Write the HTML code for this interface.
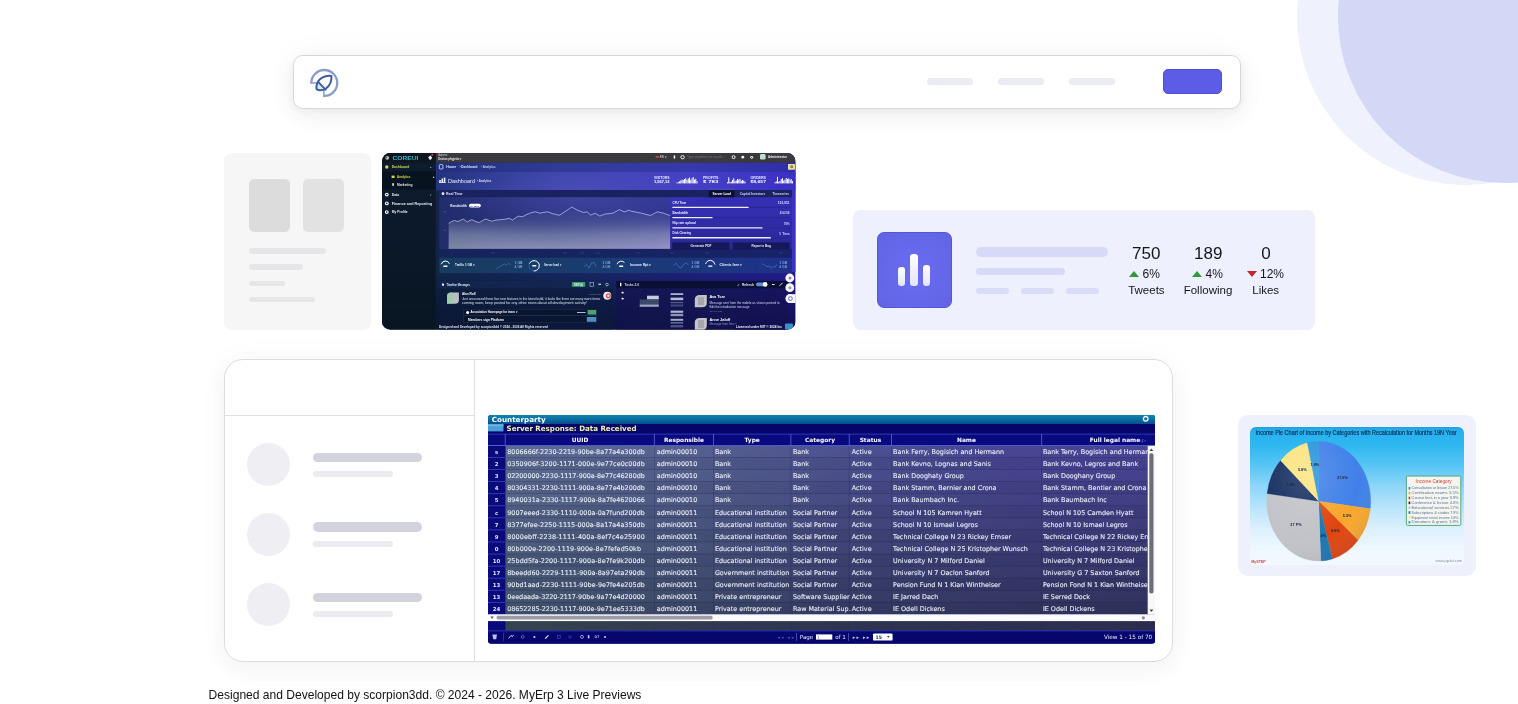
<!DOCTYPE html>
<html lang="en">
<head>
<meta charset="utf-8">
<title>MyErp 3 Live Previews</title>
<style>
*{box-sizing:border-box;margin:0;padding:0}
html,body{width:1518px;height:704px;overflow:hidden;background:#fff}
body{font-family:"Liberation Sans",sans-serif;color:#111;position:relative}
.abs{position:absolute}
#stage{position:absolute;left:0;top:0;width:1518px;height:704px;overflow:hidden;background:#fff;filter:opacity(1)}
/* blobs */
.blob{position:absolute;border-radius:50%}
#blob1{left:1296.5px;top:-151px;width:336px;height:336px;background:#eff1fd}
#blob2{left:1338px;top:-150.5px;width:333px;height:333px;background:#d2d8f5}
/* nav */
#nav{left:293px;top:55px;width:948px;height:54px;background:#fff;border:1px solid #d7d8de;border-radius:10px;box-shadow:0 7px 24px rgba(40,40,60,.06),0 2px 7px rgba(40,40,60,.045),0 0 38px rgba(40,40,60,.03)}
.pill{position:absolute;top:78.3px;height:7px;width:46px;border-radius:4px;background:#ebecf3}
#btn{left:1163px;top:69px;width:59px;height:25px;border-radius:5px;background:#5c5ce6;border:1px solid #4f4fd0}
/* skeleton card */
#sk{left:223.5px;top:153px;width:147px;height:177px;border-radius:8px;background:#f6f6f7}
.skb{position:absolute;top:179px;height:53px;width:41px;border-radius:5px}
.skl{position:absolute;left:249px;height:5.5px;border-radius:3px;background:#e6e6e8}
/* stats card */
#st{left:853px;top:210px;width:462px;height:119.5px;border-radius:8px;background:#eef0fd}
#ico{left:877px;top:232px;width:74.5px;height:75.5px;border-radius:7px;background:radial-gradient(circle at 50% 50%,#6b6df1 0%,#6466e8 75%,#6163e4 100%);border:1px solid #5658d2}
.bar{position:absolute;border-radius:3px;background:linear-gradient(#ffffff,#e4e4fb)}
.sl{position:absolute;background:#d6daf7;border-radius:5px}
.num{position:absolute;font-size:17px;line-height:17px;text-align:center;width:80px;top:245.4px;color:#15151a}
.pct{position:absolute;font-size:12px;line-height:12px;top:267.9px;color:#15151a;white-space:nowrap}
.lab{position:absolute;font-size:11.5px;line-height:12px;text-align:center;width:80px;top:284.3px;color:#15151a}
.tri{position:absolute;width:0;height:0;border-left:5px solid transparent;border-right:5px solid transparent}
.up{border-bottom:6.5px solid #2f9a3a}
.dn{border-top:6.5px solid #c8262c}
/* big card */
#big{left:224px;top:359px;width:949px;height:303px;border-radius:19px;background:#fff;border:1.3px solid #dcdde3;box-shadow:0 8px 24px rgba(40,40,60,.042),0 0 36px rgba(40,40,60,.028)}
#vdiv{left:474px;top:360px;width:1.2px;height:301px;background:#dfe0e6}
#hdiv{left:225px;top:415px;width:249px;height:1.2px;background:#dfe0e6}
.av{position:absolute;left:246.5px;width:43px;height:43px;border-radius:50%;background:#eeeef3}
.l1{position:absolute;left:312.5px;width:109.5px;height:9.5px;border-radius:5px;background:#d2d3dc}
.l2{position:absolute;left:312.5px;width:80.5px;height:5.8px;border-radius:3px;background:#ebebf0}
/* pie card */
#pc{left:1238px;top:415px;width:238px;height:161px;border-radius:10px;background:#eef0fc}
#pi{left:1250px;top:426.5px;width:214px;height:138.5px;border-radius:6px 6px 2px 2px;background:linear-gradient(#1f9fdc 0%,#26b0ee 2.5%,#30b8f1 14%,#58c6f5 28%,#8ad5f8 42%,#b6e3fb 57%,#dcf1fd 74%,#f0f8ff 90%,#f3f8ff 100%);overflow:hidden}
#foot{left:208.6px;top:687.6px;font-size:12.06px;line-height:14px;white-space:nowrap;color:#121212}
</style>
</head>
<body>
<div id="stage">
<div class="blob" id="blob1"></div>
<div class="blob" id="blob2"></div>

<!-- NAV -->
<div class="abs" id="nav"></div>
<svg class="abs" style="left:306px;top:65px" width="36" height="36" viewBox="0 0 36 36">
  <path d="M5.35 17.95 A12.95 12.95 0 1 1 17.85 30.9" fill="none" stroke="#8c9cc9" stroke-width="2.3"/>
  <path d="M4.2 17.95 L12.6 17.95 M17.85 32.05 L17.85 24.6" fill="none" stroke="#8c9cc9" stroke-width="1.5"/>
  <path d="M12.2 17 L19.8 24.8 C16.5 25.6 12.8 25.6 10.7 24.3 C10.1 22.4 10.6 19.4 12.2 17 Z" fill="#d3eafb"/>
  <path d="M25.4 10.9 C19 10.2 12.3 13 10.7 20 C10.2 22 10.2 23.5 10.7 24.3 C13 25.6 17 25.2 20 23.5 C24 20.5 25.8 16 25.4 10.9 Z" fill="none" stroke="#3d5d9f" stroke-width="2.0" stroke-linejoin="round"/>
  <path d="M12.4 17.2 L19.6 24.7" fill="none" stroke="#3d5d9f" stroke-width="1.9" stroke-linecap="round"/>
</svg>
<div class="pill" style="left:927px"></div>
<div class="pill" style="left:998px"></div>
<div class="pill" style="left:1069px"></div>
<div class="abs" id="btn"></div>

<!-- SKELETON CARD -->
<div class="abs" id="sk"></div>
<div class="skb" style="left:249px;background:#dcdcdd"></div>
<div class="skb" style="left:303px;background:#e2e2e3"></div>
<div class="skl" style="top:248px;width:77px"></div>
<div class="skl" style="top:264px;width:54px"></div>
<div class="skl" style="top:280.5px;width:35.5px"></div>
<div class="skl" style="top:296.5px;width:65.5px"></div>

<!-- DASHBOARD -->
<!--DASH-START-->
<svg class="abs" id="dash" style="left:382.2px;top:153px" width="413.6" height="176.8" viewBox="0 0 413.6 176.8" font-family="Liberation Sans, sans-serif">
<defs>
<clipPath id="dclip"><rect x="0" y="0" width="413.6" height="176.8" rx="8.5" ry="8.5"/></clipPath>
<linearGradient id="dbg" x1="0" y1="0" x2="1" y2="0"><stop offset="0" stop-color="#23347e"/><stop offset=".35" stop-color="#3a44a8"/><stop offset=".7" stop-color="#4540c6"/><stop offset="1" stop-color="#3a30c4"/></linearGradient>
<linearGradient id="dbg2" x1="0" y1="0" x2="1" y2="0"><stop offset="0" stop-color="#0f2440"/><stop offset=".45" stop-color="#16265e"/><stop offset="1" stop-color="#221c8e"/></linearGradient>
<linearGradient id="dfade" x1="0" y1="0" x2="0" y2="1"><stop offset="0" stop-color="#000" stop-opacity="0"/><stop offset="1" stop-color="#02061a" stop-opacity=".55"/></linearGradient>
<linearGradient id="dside" x1="0" y1="0" x2="0" y2="1"><stop offset="0" stop-color="#0e1c30"/><stop offset="1" stop-color="#081522"/></linearGradient>
<linearGradient id="dpanel" x1="0" y1="0" x2="1" y2="0"><stop offset="0" stop-color="#212d6c"/><stop offset=".5" stop-color="#2e3688"/><stop offset="1" stop-color="#3431a8"/></linearGradient>
<linearGradient id="dfill" x1="0" y1="0" x2="0" y2="1"><stop offset="0" stop-color="#56629a" stop-opacity="0"/><stop offset=".3" stop-color="#5c6898" stop-opacity=".3"/><stop offset=".65" stop-color="#7880aa" stop-opacity=".78"/><stop offset="1" stop-color="#8a8fb6"/></linearGradient>
<linearGradient id="dfillx" x1="0" y1="0" x2="1" y2="0"><stop offset="0" stop-color="#6c7a8c" stop-opacity=".45"/><stop offset=".45" stop-color="#8486b4" stop-opacity=".05"/><stop offset="1" stop-color="#9c94d6" stop-opacity=".5"/></linearGradient><linearGradient id="dfillm" x1="0" y1="0" x2="0" y2="1"><stop offset="0" stop-color="#fff" stop-opacity="0"/><stop offset=".45" stop-color="#fff" stop-opacity=".25"/><stop offset="1" stop-color="#fff" stop-opacity="1"/></linearGradient><mask id="dfm" maskUnits="userSpaceOnUse" x="60" y="50" width="235" height="50"><rect x="60" y="52" width="235" height="44" fill="url(#dfillm)"/></mask><radialGradient id="dglow" cx="190" cy="40" r="1" gradientUnits="userSpaceOnUse" gradientTransform="translate(190 40) scale(130 38) translate(-190 -40)"><stop offset="0" stop-color="#5a56c4" stop-opacity=".45"/><stop offset="1" stop-color="#5a56c4" stop-opacity="0"/></radialGradient>
<linearGradient id="dgauge" x1="0" y1="0" x2="1" y2="0"><stop offset="0" stop-color="#173c5e"/><stop offset=".5" stop-color="#1a3c74"/><stop offset="1" stop-color="#1f308a"/></linearGradient>
<linearGradient id="dright" x1="0" y1="0" x2="0" y2="1"><stop offset="0" stop-color="#352fb6"/><stop offset="1" stop-color="#2a2898"/></linearGradient>
</defs>
<g clip-path="url(#dclip)">
<rect width="413.6" height="176.8" fill="url(#dbg2)"/>
<rect x="53.7" y="9.5" width="359.90000000000003" height="28" fill="url(#dbg)"/>
<rect x="53.7" y="9.5" width="359.90000000000003" height="9.4" fill="#1c2a78" opacity=".35"/>
<rect x="57.3" y="37" width="352.6" height="59" fill="url(#dpanel)"/>
<rect x="288.2" y="44" width="121.7" height="52.5" fill="url(#dright)"/>
<rect x="409.9" y="18.9" width="4" height="100" fill="#3a32c2"/>
<rect x="57.3" y="18.9" width="352.6" height="77" fill="url(#dglow)"/>
<rect x="57.3" y="37" width="352.6" height="7.2" fill="#1a2360"/>
<rect x="326.8" y="36.6" width="25.8" height="7.6" fill="#0b1030"/>
<rect x="326.8" y="36.3" width="25.8" height=".7" fill="#5a60d0"/>
<rect x="57.3" y="96" width="352.6" height="8.8" fill="#17245f" opacity=".8"/>
<rect x="57.3" y="104.7" width="352.6" height="15.4" rx="1.5" fill="url(#dgauge)"/>
<rect x="53.7" y="120" width="359.90000000000003" height="57" fill="url(#dfade)"/>
<rect x="57.3" y="128" width="173.6" height="50" fill="#0d1c3a" opacity=".55"/>
<rect x="57.3" y="128" width="173.6" height="7.3" fill="#132852" opacity=".8"/>
<rect x="234.5" y="128" width="171" height="50" fill="#12124e" opacity=".6"/>
<rect x="234.5" y="128" width="171" height="7.3" fill="#0b0f34"/>
<rect x="0" y="0" width="53.7" height="176.8" fill="url(#dside)"/>
<rect x="0" y="18.3" width="53.7" height="18.2" fill="#081320"/>
<rect x="53.7" y="0" width="359.90000000000003" height="9.6" fill="#3a3a3e"/>
<rect x="0" y="0" width="53.7" height="9.6" fill="#10161f"/>
<text x="10.5" y="6.9" font-size="6.2" font-weight="700" fill="#39b6c8" textLength="26" lengthAdjust="spacingAndGlyphs">COREUI</text>
<circle cx="5.2" cy="4.8" r="1.9" fill="#c9c9c9"/><circle cx="4.4" cy="4.6" r=".9" fill="#444"/>
<path d="M46.2 4.2 l2.4 -1.6 l1.6 2.4 l-2.2 2.2 z" fill="#fff"/><circle cx="50.3" cy="1.8" r="1" fill="#e04040"/>
<text x="56.2" y="2.8" font-size="2.6" fill="#cfcfd4">Aqenmc</text>
<text x="56.2" y="6.6" font-size="3.4" font-weight="700" fill="#e8e8ec" textLength="23.5" lengthAdjust="spacingAndGlyphs">Dexian phgjette ▾</text>
<rect x="273.6" y="3.1" width="3.6" height="1.6" fill="#d04a4a"/><text x="278" y="5.2" font-size="2.8" fill="#e0e0e6">EN ▾</text>
<rect x="291.7" y="2.2" width="1.5" height="3.6" rx=".7" fill="#fff"/>
<circle cx="300.6" cy="4.2" r="1.7" fill="none" stroke="#fff" stroke-width=".9"/>
<text x="305" y="5" font-size="2.7" fill="#76767c" textLength="38" lengthAdjust="spacingAndGlyphs">Type anywhere to search...</text>
<circle cx="351.6" cy="4.1" r="1.5" fill="none" stroke="#fff" stroke-width=".9"/>
<circle cx="360.8" cy="4.2" r="1.4" fill="#fff"/><circle cx="369.7" cy="4.3" r="1.4" fill="#fff"/><circle cx="369.7" cy="4.3" r=".6" fill="#3a3a3e"/>
<rect x="378" y="1" width="5.6" height="5.6" rx="1.4" fill="#bfe0c8"/>
<text x="386" y="4.9" font-size="3" font-weight="700" fill="#f0f0f4" textLength="19" lengthAdjust="spacingAndGlyphs">Administrator</text>
<rect x="406" y="11" width="7" height="5.8" rx=".8" fill="#eadfa6"/><text x="407.6" y="15.4" font-size="3.6" font-weight="700" fill="#5a5020">⚙</text>
<circle cx="4.8" cy="14" r="1.7" fill="#d6d84a"/><text x="9.7" y="15.1" font-size="3.3" font-weight="700" fill="#d6d84a" textLength="17.5" lengthAdjust="spacingAndGlyphs">Dashboard</text>
<text x="48.3" y="15" font-size="3" fill="#9aa4b8">▴</text>
<rect x="9.6" y="22.6" width="3" height="2.4" fill="#d6d84a"/><text x="15" y="25" font-size="3" font-weight="700" fill="#d6d84a" textLength="13.4" lengthAdjust="spacingAndGlyphs">Analytics</text>
<text x="51.3" y="25.2" font-size="2.6" fill="#fff">▸</text>
<rect x="10.3" y="30" width="1.5" height="3" rx=".7" fill="#fff"/><text x="15" y="32.7" font-size="3" font-weight="700" fill="#dfe4ee" textLength="15.6" lengthAdjust="spacingAndGlyphs">Marketing</text>
<circle cx="4.8" cy="41.6" r="1.9" fill="#fff"/><circle cx="4.8" cy="41.6" r=".8" fill="#0e1c30"/>
<text x="9.7" y="42.800000000000004" font-size="3.2" font-weight="700" fill="#e6eaf2" textLength="7.5" lengthAdjust="spacingAndGlyphs">Data</text>
<circle cx="4.8" cy="50.4" r="1.9" fill="#fff"/><circle cx="4.8" cy="50.4" r=".8" fill="#0e1c30"/>
<text x="9.7" y="51.6" font-size="3.2" font-weight="700" fill="#e6eaf2" textLength="40.5" lengthAdjust="spacingAndGlyphs">Finance and Reporting</text>
<circle cx="4.8" cy="59.1" r="1.9" fill="#fff"/><circle cx="4.8" cy="59.1" r=".8" fill="#0e1c30"/>
<text x="9.7" y="60.300000000000004" font-size="3.2" font-weight="700" fill="#e6eaf2" textLength="16" lengthAdjust="spacingAndGlyphs">My Profile</text>
<text x="48.3" y="42.8" font-size="3" fill="#9aa4b8">▾</text>
<rect x="57.3" y="11.6" width="3.6" height="4.4" rx=".9" fill="none" stroke="#dfe3ff" stroke-width=".8"/>
<text x="64.3" y="15.1" font-size="3.1" font-weight="700" fill="#dfe3ff" textLength="10" lengthAdjust="spacingAndGlyphs">Home</text>
<text x="77.5" y="15.1" font-size="3.1" font-weight="700" fill="#dfe3ff" textLength="18" lengthAdjust="spacingAndGlyphs">› Dashboard</text>
<text x="99" y="15.1" font-size="3.1" font-weight="700" fill="#c8ccf6" textLength="14.5" lengthAdjust="spacingAndGlyphs">› Analytics</text>
<rect x="57.2" y="27" width="1.6" height="2.6" fill="#eef"/><rect x="59.5" y="25.6" width="1.6" height="4" fill="#eef"/><rect x="61.8" y="24.6" width="1.6" height="5" fill="#eef"/><rect x="57" y="29.2" width="6.6" height=".8" fill="#eef"/>
<text x="66" y="29.6" font-size="5.2" fill="#e8ebff" textLength="27" lengthAdjust="spacingAndGlyphs">Dashboard</text>
<text x="95" y="29.4" font-size="3.3" font-weight="700" fill="#d8dcff" textLength="14.5" lengthAdjust="spacingAndGlyphs">› Analytics</text>
<text x="272" y="25.6" font-size="2.7" font-weight="700" fill="#e6e8ff" textLength="15.5" lengthAdjust="spacingAndGlyphs">VISITORS</text>
<text x="272" y="30.3" font-size="3.4" font-weight="700" fill="#ffffff" textLength="15.5" lengthAdjust="spacingAndGlyphs">1,567,12</text>
<rect x="294.50" y="29.53" width="1" height="0.87" fill="#fff"/><rect x="295.75" y="29.09" width="1" height="1.30" fill="#fff"/><rect x="297.00" y="28.37" width="1" height="2.03" fill="#fff"/><rect x="298.25" y="27.50" width="1" height="2.90" fill="#fff"/><rect x="299.50" y="26.63" width="1" height="3.77" fill="#fff"/><rect x="300.75" y="26.92" width="1" height="3.48" fill="#fff"/><rect x="302.00" y="26.05" width="1" height="4.35" fill="#fff"/><rect x="303.25" y="25.18" width="1" height="5.22" fill="#fff"/><rect x="304.50" y="26.92" width="1" height="3.48" fill="#fff"/><rect x="305.75" y="25.61" width="1" height="4.78" fill="#fff"/><rect x="307.00" y="24.60" width="1" height="5.80" fill="#fff"/><rect x="308.25" y="27.21" width="1" height="3.19" fill="#fff"/><rect x="309.50" y="25.32" width="1" height="5.08" fill="#fff"/><rect x="310.75" y="24.02" width="1" height="6.38" fill="#fff"/><rect x="312.00" y="26.63" width="1" height="3.77" fill="#fff"/><rect x="313.25" y="25.76" width="1" height="4.64" fill="#fff"/><rect x="314.50" y="28.22" width="1" height="2.17" fill="#fff"/>
<text x="321" y="25.6" font-size="2.7" font-weight="700" fill="#e6e8ff" textLength="15.5" lengthAdjust="spacingAndGlyphs">PROFITS</text>
<text x="321" y="30.3" font-size="3.4" font-weight="700" fill="#ffffff" textLength="15.5" lengthAdjust="spacingAndGlyphs">$ 783</text>
<rect x="345.00" y="29.24" width="1" height="1.16" fill="#fff"/><rect x="346.25" y="24.31" width="1" height="6.09" fill="#fff"/><rect x="347.50" y="28.95" width="1" height="1.45" fill="#fff"/><rect x="348.75" y="28.66" width="1" height="1.74" fill="#fff"/><rect x="350.00" y="26.92" width="1" height="3.48" fill="#fff"/><rect x="351.25" y="25.18" width="1" height="5.22" fill="#fff"/><rect x="352.50" y="28.08" width="1" height="2.32" fill="#fff"/><rect x="353.75" y="27.50" width="1" height="2.90" fill="#fff"/><rect x="355.00" y="26.05" width="1" height="4.35" fill="#fff"/><rect x="356.25" y="26.63" width="1" height="3.77" fill="#fff"/><rect x="357.50" y="25.76" width="1" height="4.64" fill="#fff"/><rect x="358.75" y="27.79" width="1" height="2.61" fill="#fff"/><rect x="360.00" y="26.92" width="1" height="3.48" fill="#fff"/><rect x="361.25" y="27.50" width="1" height="2.90" fill="#fff"/><rect x="362.50" y="28.66" width="1" height="1.74" fill="#fff"/>
<text x="368.5" y="25.6" font-size="2.7" font-weight="700" fill="#e6e8ff" textLength="15.5" lengthAdjust="spacingAndGlyphs">ORDERS</text>
<text x="368.5" y="30.3" font-size="3.4" font-weight="700" fill="#ffffff" textLength="15.5" lengthAdjust="spacingAndGlyphs">$8,657</text>
<rect x="392.50" y="29.24" width="1" height="1.16" fill="#fff"/><rect x="393.75" y="28.37" width="1" height="2.03" fill="#fff"/><rect x="395.00" y="23.73" width="1" height="6.67" fill="#fff"/><rect x="396.25" y="28.66" width="1" height="1.74" fill="#fff"/><rect x="397.50" y="28.08" width="1" height="2.32" fill="#fff"/><rect x="398.75" y="26.05" width="1" height="4.35" fill="#fff"/><rect x="400.00" y="25.18" width="1" height="5.22" fill="#fff"/><rect x="401.25" y="27.50" width="1" height="2.90" fill="#fff"/><rect x="402.50" y="26.63" width="1" height="3.77" fill="#fff"/><rect x="403.75" y="24.89" width="1" height="5.51" fill="#fff"/><rect x="405.00" y="26.05" width="1" height="4.35" fill="#fff"/><rect x="406.25" y="25.18" width="1" height="5.22" fill="#fff"/><rect x="407.50" y="26.63" width="1" height="3.77" fill="#fff"/><rect x="408.75" y="26.05" width="1" height="4.35" fill="#fff"/><rect x="410.00" y="28.08" width="1" height="2.32" fill="#fff"/>
<circle cx="61" cy="40.7" r="1.4" fill="#eef"/><text x="64" y="41.8" font-size="3" font-weight="700" fill="#dfe3ff" textLength="16.5" lengthAdjust="spacingAndGlyphs">Real Time</text>
<text x="330.5" y="41.8" font-size="3" font-weight="700" fill="#fff" textLength="18.6" lengthAdjust="spacingAndGlyphs">Server Load</text>
<text x="357.8" y="41.7" font-size="2.9" font-weight="700" fill="#cfd3ff" textLength="25.4" lengthAdjust="spacingAndGlyphs">Capital Investors</text>
<text x="390.5" y="41.7" font-size="2.9" font-weight="700" fill="#cfd3ff" textLength="16.5" lengthAdjust="spacingAndGlyphs">Timeseries</text>
<path d="M66.7 70.4 L69.5 68.6 L72.5 67.5 L75.0 68.4 L76.9 68.2 L81.2 66.0 L83.4 67.6 L85.6 68.9 L88.0 67.3 L89.9 66.7 L93.0 68.2 L97.2 69.6 L100.5 67.6 L103.7 66.0 L107.0 67.4 L110.2 68.2 L114.0 67.0 L118.9 66.7 L123.0 66.2 L127.6 65.3 L130.5 67.0 L133.5 65.0 L136.3 63.1 L140.6 63.8 L144.0 61.8 L147.9 60.2 L151.0 59.2 L153.7 58.8 L158.0 60.2 L162.0 59.3 L165.3 58.8 L168.0 59.7 L171.1 60.9 L174.0 61.3 L176.9 62.4 L180.0 60.6 L182.7 58.8 L186.5 56.4 L189.9 54.0 L193.0 55.9 L195.7 57.3 L198.5 58.3 L201.5 59.5 L205.1 58.8 L208.7 62.2 L211.0 61.0 L213.5 60.4 L217.8 63.1 L220.5 62.0 L223.6 60.9 L227.0 60.7 L230.9 60.2 L234.5 58.2 L237.4 56.6 L240.0 57.9 L242.5 58.8 L246.8 57.3 L249.5 58.3 L252.6 58.8 L256.0 59.6 L259.9 60.2 L264.0 61.5 L268.6 62.4 L272.5 60.3 L275.8 58.8 L279.0 59.7 L281.6 60.2 L285.0 61.5 L288.1 62.6 L288.1 95.8 L66.7 95.8 Z" fill="url(#dfill)"/>
<path d="M66.7 70.4 L69.5 68.6 L72.5 67.5 L75.0 68.4 L76.9 68.2 L81.2 66.0 L83.4 67.6 L85.6 68.9 L88.0 67.3 L89.9 66.7 L93.0 68.2 L97.2 69.6 L100.5 67.6 L103.7 66.0 L107.0 67.4 L110.2 68.2 L114.0 67.0 L118.9 66.7 L123.0 66.2 L127.6 65.3 L130.5 67.0 L133.5 65.0 L136.3 63.1 L140.6 63.8 L144.0 61.8 L147.9 60.2 L151.0 59.2 L153.7 58.8 L158.0 60.2 L162.0 59.3 L165.3 58.8 L168.0 59.7 L171.1 60.9 L174.0 61.3 L176.9 62.4 L180.0 60.6 L182.7 58.8 L186.5 56.4 L189.9 54.0 L193.0 55.9 L195.7 57.3 L198.5 58.3 L201.5 59.5 L205.1 58.8 L208.7 62.2 L211.0 61.0 L213.5 60.4 L217.8 63.1 L220.5 62.0 L223.6 60.9 L227.0 60.7 L230.9 60.2 L234.5 58.2 L237.4 56.6 L240.0 57.9 L242.5 58.8 L246.8 57.3 L249.5 58.3 L252.6 58.8 L256.0 59.6 L259.9 60.2 L264.0 61.5 L268.6 62.4 L272.5 60.3 L275.8 58.8 L279.0 59.7 L281.6 60.2 L285.0 61.5 L288.1 62.6 L288.1 95.8 L66.7 95.8 Z" fill="url(#dfillx)" mask="url(#dfm)"/>
<path d="M66.7 70.4 L69.5 68.6 L72.5 67.5 L75.0 68.4 L76.9 68.2 L81.2 66.0 L83.4 67.6 L85.6 68.9 L88.0 67.3 L89.9 66.7 L93.0 68.2 L97.2 69.6 L100.5 67.6 L103.7 66.0 L107.0 67.4 L110.2 68.2 L114.0 67.0 L118.9 66.7 L123.0 66.2 L127.6 65.3 L130.5 67.0 L133.5 65.0 L136.3 63.1 L140.6 63.8 L144.0 61.8 L147.9 60.2 L151.0 59.2 L153.7 58.8 L158.0 60.2 L162.0 59.3 L165.3 58.8 L168.0 59.7 L171.1 60.9 L174.0 61.3 L176.9 62.4 L180.0 60.6 L182.7 58.8 L186.5 56.4 L189.9 54.0 L193.0 55.9 L195.7 57.3 L198.5 58.3 L201.5 59.5 L205.1 58.8 L208.7 62.2 L211.0 61.0 L213.5 60.4 L217.8 63.1 L220.5 62.0 L223.6 60.9 L227.0 60.7 L230.9 60.2 L234.5 58.2 L237.4 56.6 L240.0 57.9 L242.5 58.8 L246.8 57.3 L249.5 58.3 L252.6 58.8 L256.0 59.6 L259.9 60.2 L264.0 61.5 L268.6 62.4 L272.5 60.3 L275.8 58.8 L279.0 59.7 L281.6 60.2 L285.0 61.5 L288.1 62.6" fill="none" stroke="#c9cdf2" stroke-width=".7" stroke-linejoin="round"/>
<text x="68.3" y="53.6" font-size="2.9" font-weight="700" fill="#e8ebff" textLength="16.5" lengthAdjust="spacingAndGlyphs">Bandwidth</text>
<rect x="87" y="50.8" width="11.8" height="3.7" rx="1.8" fill="#fff"/><text x="88.6" y="53.6" font-size="2.5" font-weight="700" fill="#3a44a8" textLength="8.4" lengthAdjust="spacingAndGlyphs">24 kbps</text>
<rect x="61.6" y="58.4" width="2.4" height=".8" fill="#6e78c0" opacity=".6"/>
<rect x="61.6" y="76.8" width="2.4" height=".8" fill="#6e78c0" opacity=".6"/>
<text x="290.6" y="50.8" font-size="2.9" font-weight="700" fill="#eef0ff" textLength="13.6" lengthAdjust="spacingAndGlyphs">CPU Time</text>
<text x="395.7" y="51.199999999999996" font-size="3" font-weight="700" fill="#c9ccff" textLength="12" lengthAdjust="spacingAndGlyphs">156,851</text>
<rect x="290.3" y="53.699999999999996" width="117.4" height="1.3" fill="#2a2690" opacity=".8"/>
<rect x="290.3" y="53.699999999999996" width="76.4" height="1.4" rx=".5" fill="#ecedff"/>
<text x="290.6" y="61" font-size="2.9" font-weight="700" fill="#eef0ff" textLength="15.5" lengthAdjust="spacingAndGlyphs">Bandwidth</text>
<text x="397.7" y="61.4" font-size="3" font-weight="700" fill="#c9ccff" textLength="10" lengthAdjust="spacingAndGlyphs">414 GB</text>
<rect x="290.3" y="63.9" width="117.4" height="1.3" fill="#2a2690" opacity=".8"/>
<rect x="290.3" y="63.9" width="40.3" height="1.4" rx=".5" fill="#ecedff"/>
<text x="290.6" y="71.3" font-size="2.9" font-weight="700" fill="#eef0ff" textLength="23" lengthAdjust="spacingAndGlyphs">Nip rate upload</text>
<text x="401.7" y="71.7" font-size="3" font-weight="700" fill="#c9ccff" textLength="6" lengthAdjust="spacingAndGlyphs">79%</text>
<rect x="290.3" y="74.2" width="117.4" height="1.3" fill="#2a2690" opacity=".8"/>
<rect x="290.3" y="74.2" width="90.3" height="1.4" rx=".5" fill="#ecedff"/>
<text x="290.6" y="81.2" font-size="2.9" font-weight="700" fill="#eef0ff" textLength="18.4" lengthAdjust="spacingAndGlyphs">Disk Clearing</text>
<text x="397.09999999999997" y="81.60000000000001" font-size="3" font-weight="700" fill="#c9ccff" textLength="10.6" lengthAdjust="spacingAndGlyphs">1 Tera</text>
<rect x="290.3" y="84.10000000000001" width="117.4" height="1.3" fill="#2a2690" opacity=".8"/>
<rect x="290.3" y="84.10000000000001" width="98.6" height="1.4" rx=".5" fill="#ecedff"/>
<rect x="290.3" y="89.4" width="57.3" height="7.2" fill="#15195a"/><rect x="350.7" y="89.4" width="57" height="7.2" fill="#15195a"/>
<text x="308.5" y="94.1" font-size="2.9" font-weight="700" fill="#e8eaff" textLength="21" lengthAdjust="spacingAndGlyphs">Generate PDF</text>
<text x="369.5" y="94.1" font-size="2.9" font-weight="700" fill="#e8eaff" textLength="19.5" lengthAdjust="spacingAndGlyphs">Report a Bug</text>
<rect x="109" y="99.4" width="4" height=".9" fill="#4a58a8" opacity=".5"/>
<rect x="181" y="99.4" width="4" height=".9" fill="#4a58a8" opacity=".5"/>
<rect x="198" y="99.4" width="4" height=".9" fill="#4a58a8" opacity=".5"/>
<rect x="214" y="99.4" width="4" height=".9" fill="#4a58a8" opacity=".5"/>
<rect x="254" y="99.4" width="4" height=".9" fill="#4a58a8" opacity=".5"/>
<rect x="288" y="99.4" width="4" height=".9" fill="#4a58a8" opacity=".5"/>
<rect x="323" y="99.4" width="4" height=".9" fill="#4a58a8" opacity=".5"/>
<rect x="397" y="99.4" width="4" height=".9" fill="#4a58a8" opacity=".5"/>
<path d="M59.36 110.83 A4.3 4.3 0 0 1 67.30 110.48" fill="none" stroke="#fff" stroke-width="1" stroke-linecap="round"/><rect x="61.3" y="112.6" width="4.2" height="1.3" rx=".4" fill="#fff"/>
<circle cx="152.2" cy="112.8" r="5.2" fill="none" stroke="#2c5c98" stroke-width="1"/><path d="M147.6 110.2 A5.2 5.2 0 1 1 152.2 118" fill="none" stroke="#fff" stroke-width="1" stroke-linecap="round"/><rect x="150.2" y="112" width="4.2" height="1.5" rx=".4" fill="#fff"/>
<path d="M235.16 110.83 A4.3 4.3 0 0 1 242.15 109.18" fill="none" stroke="#fff" stroke-width="1" stroke-linecap="round"/><rect x="237.1" y="112.6" width="4.2" height="1.3" rx=".4" fill="#fff"/>
<path d="M323.79 110.56 A4.8 4.8 0 0 1 333.00 111.24" fill="none" stroke="#fff" stroke-width="1" stroke-linecap="round"/><rect x="326.2" y="112.5" width="4.2" height="1.3" rx=".4" fill="#fff"/>
<text x="73" y="113" font-size="3" font-weight="700" fill="#e8f0ff" textLength="20" lengthAdjust="spacingAndGlyphs">Traffic 1 GB ▾</text>
<text x="162" y="113" font-size="3" font-weight="700" fill="#e8f0ff" textLength="17.5" lengthAdjust="spacingAndGlyphs">Server load ▾</text>
<text x="248.2" y="113" font-size="3" font-weight="700" fill="#e8f0ff" textLength="21.5" lengthAdjust="spacingAndGlyphs">Income Rpt ▾</text>
<text x="337.6" y="113" font-size="3" font-weight="700" fill="#e8f0ff" textLength="23" lengthAdjust="spacingAndGlyphs">Clients free ▾</text>
<path d="M114.5 115.6 L116.5 114.2 L118.5 113.6 L120.5 112.0 L122.5 111.0 L124.5 112.2 L126.5 110.4 L128.5 111.6" fill="none" stroke="#5f9ad8" stroke-width=".6" opacity=".75"/>
<path d="M202.0 113.6 L204.5 111.6 L207.0 115.2 L209.5 110.0 L212.0 109.6 L214.0 113.6" fill="none" stroke="#5f9ad8" stroke-width=".6" opacity=".75"/>
<path d="M291.5 112.6 L294.0 110.2 L296.5 113.6 L299.0 115.2 L301.5 111.6 L304.0 110.0 L306.5 112.0" fill="none" stroke="#5f9ad8" stroke-width=".6" opacity=".75"/>
<path d="M380.0 110.6 L382.5 112.2 L385.0 113.6 L387.5 113.0 L389.0 115.6 L391.0 113.6 L393.0 114.2 L395.0 111.6" fill="none" stroke="#5f9ad8" stroke-width=".6" opacity=".75"/>
<text x="132.6" y="111.2" font-size="2.7" font-weight="700" fill="#8fc4ee" opacity=".8" textLength="8" lengthAdjust="spacingAndGlyphs">1 GB</text><text x="132.6" y="115.4" font-size="2.7" font-weight="700" fill="#8fc4ee" opacity=".7" textLength="8" lengthAdjust="spacingAndGlyphs">4 GB</text>
<text x="220.4" y="111.2" font-size="2.7" font-weight="700" fill="#8fc4ee" opacity=".8" textLength="8" lengthAdjust="spacingAndGlyphs">1 GB</text><text x="220.4" y="115.4" font-size="2.7" font-weight="700" fill="#8fc4ee" opacity=".7" textLength="8" lengthAdjust="spacingAndGlyphs">4 GB</text>
<text x="309.5" y="111.2" font-size="2.7" font-weight="700" fill="#8fc4ee" opacity=".8" textLength="8" lengthAdjust="spacingAndGlyphs">1 GB</text><text x="309.5" y="115.4" font-size="2.7" font-weight="700" fill="#8fc4ee" opacity=".7" textLength="8" lengthAdjust="spacingAndGlyphs">4 GB</text>
<text x="397.2" y="111.2" font-size="2.7" font-weight="700" fill="#8fc4ee" opacity=".8" textLength="8" lengthAdjust="spacingAndGlyphs">1 GB</text><text x="397.2" y="115.4" font-size="2.7" font-weight="700" fill="#8fc4ee" opacity=".7" textLength="8" lengthAdjust="spacingAndGlyphs">4 GB</text>
<path d="M60.6 130 l1.6 1.2 l-.6 1.8 l-1.8 -.8 z" fill="#fff"/><text x="64.5" y="133" font-size="3" font-weight="700" fill="#e4ecf8" textLength="23.5" lengthAdjust="spacingAndGlyphs">Timeline Messages</text>
<rect x="189.9" y="129.1" width="13.3" height="4.7" rx=".6" fill="#3d9c6c"/><text x="192" y="132.7" font-size="2.7" font-weight="700" fill="#d9f5e6" textLength="9" lengthAdjust="spacingAndGlyphs">NEW (6)</text>
<rect x="208" y="129.6" width="3.6" height="3.6" fill="none" stroke="#b9c4e0" stroke-width=".6"/><rect x="216.4" y="130.6" width="2.6" height="1.4" fill="#b9c4e0"/><circle cx="225" cy="131.6" r="1.3" fill="none" stroke="#b9c4e0" stroke-width=".7"/>
<path d="M65 143 q0 -3.5 4 -3.5 h7.9 v7.8 q0 3.5 -4 3.5 h-7.9 z" fill="#b9c0c0"/><path d="M65 143 q0 -3.5 4 -3.5 h1.5 v11.3 h-5.5 z" fill="#8fd0a0" opacity=".6"/>
<text x="80" y="142.3" font-size="3" font-weight="700" fill="#fff" textLength="13.6" lengthAdjust="spacingAndGlyphs">Alan Rolf</text>
<text x="80" y="146.9" font-size="3" fill="#d8e2f0" textLength="138" lengthAdjust="spacingAndGlyphs">Just announced these five new features in the latest build, it looks like there are many more items</text>
<text x="80" y="151" font-size="3" fill="#d8e2f0" textLength="125" lengthAdjust="spacingAndGlyphs">coming soon, keep posted for any other news about all development activity!</text>
<text x="207" y="141.9" font-size="2.4" fill="#7d8cae" textLength="12" lengthAdjust="spacingAndGlyphs">8 mins ago</text>
<rect x="81.2" y="156.2" width="133.3" height="6.6" fill="#0a1630" stroke="#2a3c62" stroke-width=".4"/><rect x="81.2" y="162.8" width="133.3" height="7" fill="#0a1630" stroke="#2a3c62" stroke-width=".4"/>
<circle cx="85.6" cy="159.4" r="1.5" fill="#fff"/><text x="88.5" y="160.5" font-size="3" font-weight="700" fill="#fff" textLength="47" lengthAdjust="spacingAndGlyphs">Association Homepage for team ▾</text>
<text x="86" y="167.7" font-size="3" font-weight="700" fill="#fff" textLength="36" lengthAdjust="spacingAndGlyphs">Members sign Platform</text>
<rect x="195" y="159" width="8.6" height=".9" fill="#c6cde0"/><rect x="205.6" y="157" width="8.6" height="4.6" fill="#4aa46e"/><rect x="204.8" y="164" width="9.4" height="4.8" fill="#4d8fc0"/>
<text x="57" y="175.2" font-size="3" font-weight="700" fill="#dfe6f4" textLength="109" lengthAdjust="spacingAndGlyphs">Designed and Developed by scorpion3dd © 2024 - 2026 All Rights reserved</text>
<circle cx="225.3" cy="142.8" r="4" fill="#f4ecec"/><circle cx="226.4" cy="142.8" r="1.9" fill="none" stroke="#d05050" stroke-width="1.3"/>
<rect x="238" y="129.8" width="1.4" height="3.4" fill="#fff"/><text x="242.6" y="132.9" font-size="2.9" font-weight="700" fill="#cfd5f4" textLength="14.5" lengthAdjust="spacingAndGlyphs">Tasks 2.0</text>
<text x="355.5" y="132.7" font-size="2.8" font-weight="700" fill="#dfe3ff" textLength="16.5" lengthAdjust="spacingAndGlyphs">✓ Refresh</text>
<rect x="374" y="129.6" width="10" height="3.6" rx="1.8" fill="#5d8fd0"/><circle cx="383.2" cy="131.4" r="2.3" fill="#fff"/>
<rect x="390" y="131" width="2.6" height=".9" fill="#fff"/><path d="M397.6 132.8 l3 -3" stroke="#fff" stroke-width=".9"/>
<rect x="239.6" y="138.8" width="2" height="1.6" fill="#fff"/><rect x="239.6" y="144.8" width="2" height="1.6" fill="#fff"/>
<rect x="265" y="142.7" width="11.8" height="3.8" fill="#c6ccd8"/><rect x="257.7" y="146.5" width="19.1" height="4.6" fill="#3b4a6c"/><rect x="257.7" y="151.4" width="19.1" height="2.4" fill="#9aa4bc"/>
<rect x="288.6" y="140.2" width="12.6" height="1.8" fill="#dfe5f6" opacity=".75"/>
<rect x="288.6" y="144.6" width="12.6" height="2.6" fill="#eef2ff" opacity=".75"/>
<rect x="288.6" y="149" width="12.6" height="1.2" fill="#6e7bb0" opacity=".75"/>
<rect x="288.6" y="151.4" width="12.6" height="2.2" fill="#4a568a" opacity=".75"/>
<rect x="288.6" y="157.6" width="12.6" height="2.2" fill="#e4e9f8" opacity=".75"/>
<rect x="288.6" y="160.8" width="12.6" height="2.4" fill="#b8c2e0" opacity=".75"/>
<rect x="288.6" y="165.8" width="12.6" height="2" fill="#d8def2" opacity=".75"/>
<rect x="288.6" y="169" width="12.6" height="1.6" fill="#7e8ab6" opacity=".75"/>
<rect x="288.6" y="172" width="12.6" height="2.4" fill="#5a669a" opacity=".75"/>
<path d="M312.8 146.6 q0 -4.5 5 -4.5 h7 v7.6 q0 4.6 -5 4.6 h-7 z" fill="#c2c4c8"/><path d="M316 144.1 h6 v8 h-6 z" fill="#8e9096" opacity=".55"/>
<path d="M312.8 169.4 q0 -4.5 5 -4.5 h7 v7.6 q0 4.6 -5 4.6 h-7 z" fill="#c2c4c8"/><path d="M316 166.9 h6 v8 h-6 z" fill="#8e9096" opacity=".55"/>
<text x="327.4" y="145.2" font-size="3.3" font-weight="700" fill="#fff" textLength="15.6" lengthAdjust="spacingAndGlyphs">Ava Tsar</text>
<text x="327.4" y="150.6" font-size="2.9" fill="#d3d8f4" textLength="70" lengthAdjust="spacingAndGlyphs">Message sent from the mobile as shown posted to</text>
<text x="327.4" y="154.8" font-size="2.9" fill="#d3d8f4" textLength="40" lengthAdjust="spacingAndGlyphs">Edit the introduction message</text>
<text x="327.4" y="158.9" font-size="2.4" fill="#7a82c0" textLength="13" lengthAdjust="spacingAndGlyphs">10:47 PM</text>
<text x="327.4" y="167.6" font-size="3.3" font-weight="700" fill="#fff" textLength="21" lengthAdjust="spacingAndGlyphs">Anne Jaloff</text>
<text x="327.4" y="172.4" font-size="2.8" fill="#8e96c8" textLength="27" lengthAdjust="spacingAndGlyphs">Message from forum</text>
<rect x="352" y="170.6" width="52" height="6.2" fill="#101050" opacity=".85"/><text x="354" y="175" font-size="3" font-weight="700" fill="#eef0ff" textLength="46" lengthAdjust="spacingAndGlyphs">Licensed under MIT © 2024 Inc</text>
<rect x="403" y="170.6" width="8" height="6.2" rx="1" fill="#3f8ec8"/>
<circle cx="407.8" cy="125" r="4.4" fill="#f7f7fb"/><circle cx="408" cy="125" r="1.5" fill="#8a8a92"/>
<circle cx="407.8" cy="134.7" r="4.4" fill="#f7f7fb"/><circle cx="408" cy="134.7" r="1.5" fill="#9a9aa2"/>
<circle cx="407.8" cy="145.6" r="4.4" fill="#f7f7fb"/><circle cx="408" cy="145.6" r="1.5" fill="#5c6ad0"/>
<rect x="406" y="141.2" width="8" height="8.8" fill="#f7f7fb"/><circle cx="408.4" cy="145.6" r="1.9" fill="none" stroke="#5c6ad0" stroke-width="1"/>
</g></svg>
<!--DASH-END-->

<!-- STATS CARD -->
<div class="abs" id="st"></div>
<div class="abs" id="ico"></div>
<div class="bar" style="left:898px;top:267px;width:7.2px;height:18.6px"></div>
<div class="bar" style="left:910.3px;top:253.6px;width:7.4px;height:32px"></div>
<div class="bar" style="left:922.7px;top:265.3px;width:7.3px;height:20.3px"></div>
<div class="sl" style="left:976px;top:246.8px;width:132px;height:10px"></div>
<div class="sl" style="left:976px;top:268px;width:88.5px;height:7px;border-radius:4px"></div>
<div class="sl" style="left:976px;top:288.3px;width:32.5px;height:5.8px;border-radius:3px;background:#d9dcf6"></div>
<div class="sl" style="left:1021px;top:288.3px;width:32.5px;height:5.8px;border-radius:3px;background:#d9dcf6"></div>
<div class="sl" style="left:1066px;top:288.3px;width:33px;height:5.8px;border-radius:3px;background:#d9dcf6"></div>
<div class="num" style="left:1106.2px">750</div>
<div class="num" style="left:1168.3px">189</div>
<div class="num" style="left:1226px">0</div>
<div class="tri up" style="left:1129px;top:271px"></div><div class="pct" style="left:1142.5px">6%</div>
<div class="tri up" style="left:1192px;top:271px"></div><div class="pct" style="left:1205.5px">4%</div>
<div class="tri dn" style="left:1246.7px;top:270.5px"></div><div class="pct" style="left:1260px">12%</div>
<div class="lab" style="left:1106.4px">Tweets</div>
<div class="lab" style="left:1168px">Following</div>
<div class="lab" style="left:1225.7px">Likes</div>

<!-- BIG CARD -->
<div class="abs" id="big"></div>
<div class="abs" id="vdiv"></div>
<div class="abs" id="hdiv"></div>
<div class="av" style="top:443px"></div><div class="l1" style="top:452.6px"></div><div class="l2" style="top:471.2px"></div>
<div class="av" style="top:513px"></div><div class="l1" style="top:522.4px"></div><div class="l2" style="top:540.8px"></div>
<div class="av" style="top:583px"></div><div class="l1" style="top:592.5px"></div><div class="l2" style="top:611.2px"></div>

<!-- TABLE -->
<!--TABLE-START-->
<svg class="abs" id="tbl" style="left:488px;top:415px" width="667.3" height="228.8" viewBox="0 0 667.3 228.8" font-family="DejaVu Sans, Liberation Sans, sans-serif">
<defs>
<clipPath id="tclip"><path d="M0 3 Q0 0 3 0 H664.3 Q667.3 0 667.3 3 V225.3 Q667.3 228.8 663.8 228.8 H3.5 Q0 228.8 0 225.3 Z"/></clipPath>
<clipPath id="tdata"><rect x="17.2" y="19" width="642.5" height="181"/></clipPath>
<linearGradient id="ttitle" x1="0" y1="0" x2="0" y2="1"><stop offset="0" stop-color="#0d86ae"/><stop offset=".45" stop-color="#0c6fa2"/><stop offset="1" stop-color="#0a4a8c"/></linearGradient>
<linearGradient id="trow" x1="0" y1="0" x2="1" y2="0"><stop offset="0" stop-color="#5e6c93"/><stop offset=".28" stop-color="#566190"/><stop offset=".55" stop-color="#4d5192"/><stop offset=".8" stop-color="#494695"/><stop offset="1" stop-color="#4a4598"/></linearGradient>
<linearGradient id="trowb" x1="0" y1="0" x2="1" y2="0"><stop offset="0" stop-color="#41536a"/><stop offset=".3" stop-color="#3b4766"/><stop offset=".55" stop-color="#353a62"/><stop offset="1" stop-color="#30325a"/></linearGradient>
<linearGradient id="tblank" x1="0" y1="0" x2="1" y2="0"><stop offset="0" stop-color="#35434f"/><stop offset=".4" stop-color="#303750"/><stop offset="1" stop-color="#2b2d4f"/></linearGradient>
<linearGradient id="tmg" x1="0" y1="0" x2="0" y2="1"><stop offset="0" stop-color="#fff" stop-opacity="0"/><stop offset="1" stop-color="#fff" stop-opacity="1"/></linearGradient>
<mask id="tmask" maskUnits="userSpaceOnUse" x="0" y="30.5" width="667.3" height="169"><rect x="0" y="30.5" width="667.3" height="169" fill="url(#tmg)"/></mask>
<linearGradient id="tdark" x1="0" y1="0" x2="0" y2="1"><stop offset="0" stop-color="#0a1428" stop-opacity="0"/><stop offset=".45" stop-color="#0a1428" stop-opacity=".2"/><stop offset="1" stop-color="#0a1428" stop-opacity=".52"/></linearGradient>
<linearGradient id="tteal" x1="0" y1="0" x2="1" y2="0"><stop offset="0" stop-color="#2d5a5a" stop-opacity=".35"/><stop offset=".5" stop-color="#2d5a5a" stop-opacity="0"/></linearGradient>
</defs>
<g clip-path="url(#tclip)">
<rect width="667.3" height="228.8" fill="#07076e"/>
<rect width="667.3" height="9.2" fill="url(#ttitle)"/>
<rect y="9.2" width="667.3" height="10" fill="#05056a"/>
<rect x="0" y="9.2" width="15.5" height="7.2" fill="#4a9fd6"/><rect x="0" y="9.2" width="15.5" height="2" fill="#7cc0ea" opacity=".7"/>
<text x="3.7" y="6.9" font-size="7" font-weight="700" fill="#ffffff" textLength="54" lengthAdjust="spacingAndGlyphs">Counterparty</text>
<text x="18.6" y="15.6" font-size="7.4" font-weight="700" fill="#f3f1a6" textLength="130" lengthAdjust="spacingAndGlyphs">Server Response: Data Received</text>
<circle cx="657.7" cy="3.8" r="2.3" fill="#0c6fa2" stroke="#fff" stroke-width="1.3"/>
<rect x="0" y="19" width="667.3" height="11.5" fill="#0a0a80"/>
<rect x="17.2" y="30.5" width="642.8" height="169.04" fill="url(#trow)"/>
<rect x="17.2" y="30.5" width="642.8" height="169.04" fill="url(#trowb)" mask="url(#tmask)"/>
<rect x="17.2" y="206" width="650.0999999999999" height="9.7" fill="url(#tblank)"/>
<rect x="0" y="30.5" width="17.2" height="168.84" fill="#0a0a7a"/>
<rect x="0" y="206" width="17.2" height="9.7" fill="#0a0a7a"/>
<rect x="17.2" y="42.56" width="642.8" height="12.06" fill="#101838" opacity=".06"/>
<rect x="17.2" y="66.68" width="642.8" height="12.06" fill="#101838" opacity=".06"/>
<rect x="17.2" y="90.80" width="642.8" height="12.06" fill="#101838" opacity=".06"/>
<rect x="17.2" y="114.92" width="642.8" height="12.06" fill="#101838" opacity=".06"/>
<rect x="17.2" y="139.04" width="642.8" height="12.06" fill="#101838" opacity=".06"/>
<rect x="17.2" y="163.16" width="642.8" height="12.06" fill="#101838" opacity=".06"/>
<rect x="17.2" y="187.28" width="642.8" height="12.06" fill="#101838" opacity=".06"/>
<rect x="17.2" y="30.20" width="642.8" height=".6" fill="#1a1e44" opacity=".38"/>
<rect x="0" y="30.15" width="17.2" height=".7" fill="#3e4ed0"/>
<rect x="17.2" y="42.26" width="642.8" height=".6" fill="#1a1e44" opacity=".38"/>
<rect x="0" y="42.21" width="17.2" height=".7" fill="#3e4ed0"/>
<rect x="17.2" y="54.32" width="642.8" height=".6" fill="#1a1e44" opacity=".38"/>
<rect x="0" y="54.27" width="17.2" height=".7" fill="#3e4ed0"/>
<rect x="17.2" y="66.38" width="642.8" height=".6" fill="#1a1e44" opacity=".38"/>
<rect x="0" y="66.33" width="17.2" height=".7" fill="#3e4ed0"/>
<rect x="17.2" y="78.44" width="642.8" height=".6" fill="#1a1e44" opacity=".38"/>
<rect x="0" y="78.39" width="17.2" height=".7" fill="#3e4ed0"/>
<rect x="17.2" y="90.50" width="642.8" height=".6" fill="#1a1e44" opacity=".38"/>
<rect x="0" y="90.45" width="17.2" height=".7" fill="#3e4ed0"/>
<rect x="17.2" y="102.56" width="642.8" height=".6" fill="#1a1e44" opacity=".38"/>
<rect x="0" y="102.51" width="17.2" height=".7" fill="#3e4ed0"/>
<rect x="17.2" y="114.62" width="642.8" height=".6" fill="#1a1e44" opacity=".38"/>
<rect x="0" y="114.57" width="17.2" height=".7" fill="#3e4ed0"/>
<rect x="17.2" y="126.68" width="642.8" height=".6" fill="#1a1e44" opacity=".38"/>
<rect x="0" y="126.63" width="17.2" height=".7" fill="#3e4ed0"/>
<rect x="17.2" y="138.74" width="642.8" height=".6" fill="#1a1e44" opacity=".38"/>
<rect x="0" y="138.69" width="17.2" height=".7" fill="#3e4ed0"/>
<rect x="17.2" y="150.80" width="642.8" height=".6" fill="#1a1e44" opacity=".38"/>
<rect x="0" y="150.75" width="17.2" height=".7" fill="#3e4ed0"/>
<rect x="17.2" y="162.86" width="642.8" height=".6" fill="#1a1e44" opacity=".38"/>
<rect x="0" y="162.81" width="17.2" height=".7" fill="#3e4ed0"/>
<rect x="17.2" y="174.92" width="642.8" height=".6" fill="#1a1e44" opacity=".38"/>
<rect x="0" y="174.87" width="17.2" height=".7" fill="#3e4ed0"/>
<rect x="17.2" y="186.98" width="642.8" height=".6" fill="#1a1e44" opacity=".38"/>
<rect x="0" y="186.93" width="17.2" height=".7" fill="#3e4ed0"/>
<rect x="17.2" y="199.04" width="642.8" height=".6" fill="#1a1e44" opacity=".38"/>
<rect x="0" y="198.99" width="17.2" height=".7" fill="#3e4ed0"/>
<rect x="16.9" y="30.5" width=".6" height="184.84" fill="#1a1e44" opacity=".3"/>
<rect x="166.0" y="30.5" width=".6" height="184.84" fill="#1a1e44" opacity=".3"/>
<rect x="225.1" y="30.5" width=".6" height="184.84" fill="#1a1e44" opacity=".3"/>
<rect x="302.59999999999997" y="30.5" width=".6" height="184.84" fill="#1a1e44" opacity=".3"/>
<rect x="360.9" y="30.5" width=".6" height="184.84" fill="#1a1e44" opacity=".3"/>
<rect x="403.2" y="30.5" width=".6" height="184.84" fill="#1a1e44" opacity=".3"/>
<rect x="553.4000000000001" y="30.5" width=".6" height="184.84" fill="#1a1e44" opacity=".3"/>
<rect x="0" y="18.7" width="667.3" height=".7" fill="#3e4ed0"/><rect x="0" y="30.1" width="667.3" height=".8" fill="#5767de"/>
<rect x="16.8" y="19" width=".8" height="11.5" fill="#5767de"/>
<rect x="165.9" y="19" width=".8" height="11.5" fill="#5767de"/>
<rect x="225.0" y="19" width=".8" height="11.5" fill="#5767de"/>
<rect x="302.5" y="19" width=".8" height="11.5" fill="#5767de"/>
<rect x="360.8" y="19" width=".8" height="11.5" fill="#5767de"/>
<rect x="403.1" y="19" width=".8" height="11.5" fill="#5767de"/>
<rect x="553.3000000000001" y="19" width=".8" height="11.5" fill="#5767de"/>
<g clip-path="url(#tdata)">
<text x="92" y="26.9" font-size="5.9" font-weight="700" fill="#fff" text-anchor="middle">UUID</text>
<text x="196" y="26.9" font-size="5.9" font-weight="700" fill="#fff" text-anchor="middle">Responsible</text>
<text x="264.2" y="26.9" font-size="5.9" font-weight="700" fill="#fff" text-anchor="middle">Type</text>
<text x="332" y="26.9" font-size="5.9" font-weight="700" fill="#fff" text-anchor="middle">Category</text>
<text x="382.4" y="26.9" font-size="5.9" font-weight="700" fill="#fff" text-anchor="middle">Status</text>
<text x="478.5" y="26.9" font-size="5.9" font-weight="700" fill="#fff" text-anchor="middle">Name</text>
<text x="627" y="26.9" font-size="5.9" font-weight="700" fill="#fff" text-anchor="middle">Full legal name</text>
<text x="645.5" y="26.6" font-size="4.5" fill="#8f98e8">— ◁▷</text>
<text x="19.2" y="39.25" font-size="6.42" fill="#eaedf7" stroke="#eaedf7" stroke-width=".1" textLength="137.6" lengthAdjust="spacing">8006666f-2230-2219-90be-8a77a4a300db</text>
<text x="168.8" y="39.25" font-size="6.42" fill="#eaedf7" stroke="#eaedf7" stroke-width=".1">admin00010</text>
<text x="226.9" y="39.25" font-size="6.42" fill="#eaedf7" stroke="#eaedf7" stroke-width=".1">Bank</text>
<text x="304.9" y="39.25" font-size="6.42" fill="#eaedf7" stroke="#eaedf7" stroke-width=".1">Bank</text>
<text x="363.8" y="39.25" font-size="6.42" fill="#eaedf7" stroke="#eaedf7" stroke-width=".1">Active</text>
<text x="405.1" y="39.25" font-size="6.42" fill="#eaedf7" stroke="#eaedf7" stroke-width=".1">Bank Ferry, Bogisich and Hermann</text>
<text x="554.9" y="39.25" font-size="6.42" fill="#eaedf7" stroke="#eaedf7" stroke-width=".1">Bank Terry, Bogisich and Hermann</text>
<text x="19.2" y="51.31" font-size="6.42" fill="#eaedf7" stroke="#eaedf7" stroke-width=".1" textLength="137.6" lengthAdjust="spacing">0350906f-3200-1171-000e-9e77ce0c00db</text>
<text x="168.8" y="51.31" font-size="6.42" fill="#eaedf7" stroke="#eaedf7" stroke-width=".1">admin00010</text>
<text x="226.9" y="51.31" font-size="6.42" fill="#eaedf7" stroke="#eaedf7" stroke-width=".1">Bank</text>
<text x="304.9" y="51.31" font-size="6.42" fill="#eaedf7" stroke="#eaedf7" stroke-width=".1">Bank</text>
<text x="363.8" y="51.31" font-size="6.42" fill="#eaedf7" stroke="#eaedf7" stroke-width=".1">Active</text>
<text x="405.1" y="51.31" font-size="6.42" fill="#eaedf7" stroke="#eaedf7" stroke-width=".1">Bank Kevno, Lognas and Sanis</text>
<text x="554.9" y="51.31" font-size="6.42" fill="#eaedf7" stroke="#eaedf7" stroke-width=".1">Bank Kevno, Legros and Bank</text>
<text x="19.2" y="63.37" font-size="6.42" fill="#eaedf7" stroke="#eaedf7" stroke-width=".1" textLength="137.6" lengthAdjust="spacing">02200000-2230-1117-900a-8e77c46280db</text>
<text x="168.8" y="63.37" font-size="6.42" fill="#eaedf7" stroke="#eaedf7" stroke-width=".1">admin00010</text>
<text x="226.9" y="63.37" font-size="6.42" fill="#eaedf7" stroke="#eaedf7" stroke-width=".1">Bank</text>
<text x="304.9" y="63.37" font-size="6.42" fill="#eaedf7" stroke="#eaedf7" stroke-width=".1">Bank</text>
<text x="363.8" y="63.37" font-size="6.42" fill="#eaedf7" stroke="#eaedf7" stroke-width=".1">Active</text>
<text x="405.1" y="63.37" font-size="6.42" fill="#eaedf7" stroke="#eaedf7" stroke-width=".1">Bank Dooghaty Group</text>
<text x="554.9" y="63.37" font-size="6.42" fill="#eaedf7" stroke="#eaedf7" stroke-width=".1">Bank Dooghany Group</text>
<text x="19.2" y="75.43" font-size="6.42" fill="#eaedf7" stroke="#eaedf7" stroke-width=".1" textLength="137.6" lengthAdjust="spacing">80304331-2230-1111-900a-8e77e4b200db</text>
<text x="168.8" y="75.43" font-size="6.42" fill="#eaedf7" stroke="#eaedf7" stroke-width=".1">admin00010</text>
<text x="226.9" y="75.43" font-size="6.42" fill="#eaedf7" stroke="#eaedf7" stroke-width=".1">Bank</text>
<text x="304.9" y="75.43" font-size="6.42" fill="#eaedf7" stroke="#eaedf7" stroke-width=".1">Bank</text>
<text x="363.8" y="75.43" font-size="6.42" fill="#eaedf7" stroke="#eaedf7" stroke-width=".1">Active</text>
<text x="405.1" y="75.43" font-size="6.42" fill="#eaedf7" stroke="#eaedf7" stroke-width=".1">Bank Stamm, Bernier and Crona</text>
<text x="554.9" y="75.43" font-size="6.42" fill="#eaedf7" stroke="#eaedf7" stroke-width=".1">Bank Stamm, Bentier and Crona</text>
<text x="19.2" y="87.49" font-size="6.42" fill="#eaedf7" stroke="#eaedf7" stroke-width=".1" textLength="137.6" lengthAdjust="spacing">8940031a-2330-1117-900a-8a7fe4620066</text>
<text x="168.8" y="87.49" font-size="6.42" fill="#eaedf7" stroke="#eaedf7" stroke-width=".1">admin00010</text>
<text x="226.9" y="87.49" font-size="6.42" fill="#eaedf7" stroke="#eaedf7" stroke-width=".1">Bank</text>
<text x="304.9" y="87.49" font-size="6.42" fill="#eaedf7" stroke="#eaedf7" stroke-width=".1">Bank</text>
<text x="363.8" y="87.49" font-size="6.42" fill="#eaedf7" stroke="#eaedf7" stroke-width=".1">Active</text>
<text x="405.1" y="87.49" font-size="6.42" fill="#eaedf7" stroke="#eaedf7" stroke-width=".1">Bank Baumbach Inc.</text>
<text x="554.9" y="87.49" font-size="6.42" fill="#eaedf7" stroke="#eaedf7" stroke-width=".1">Bank Baumbach Inc</text>
<text x="19.2" y="99.55" font-size="6.42" fill="#eaedf7" stroke="#eaedf7" stroke-width=".1" textLength="137.6" lengthAdjust="spacing">9007eeed-2330-1110-000a-0a7fund200db</text>
<text x="168.8" y="99.55" font-size="6.42" fill="#eaedf7" stroke="#eaedf7" stroke-width=".1">admin00011</text>
<text x="226.9" y="99.55" font-size="6.42" fill="#eaedf7" stroke="#eaedf7" stroke-width=".1">Educational institution</text>
<text x="304.9" y="99.55" font-size="6.42" fill="#eaedf7" stroke="#eaedf7" stroke-width=".1">Social Partner</text>
<text x="363.8" y="99.55" font-size="6.42" fill="#eaedf7" stroke="#eaedf7" stroke-width=".1">Active</text>
<text x="405.1" y="99.55" font-size="6.42" fill="#eaedf7" stroke="#eaedf7" stroke-width=".1">School N 105 Kamren Hyatt</text>
<text x="554.9" y="99.55" font-size="6.42" fill="#eaedf7" stroke="#eaedf7" stroke-width=".1">School N 105 Camden Hyatt</text>
<text x="19.2" y="111.61" font-size="6.42" fill="#eaedf7" stroke="#eaedf7" stroke-width=".1" textLength="137.6" lengthAdjust="spacing">8377efee-2250-1115-000a-8a17a4a350db</text>
<text x="168.8" y="111.61" font-size="6.42" fill="#eaedf7" stroke="#eaedf7" stroke-width=".1">admin00011</text>
<text x="226.9" y="111.61" font-size="6.42" fill="#eaedf7" stroke="#eaedf7" stroke-width=".1">Educational institution</text>
<text x="304.9" y="111.61" font-size="6.42" fill="#eaedf7" stroke="#eaedf7" stroke-width=".1">Social Partner</text>
<text x="363.8" y="111.61" font-size="6.42" fill="#eaedf7" stroke="#eaedf7" stroke-width=".1">Active</text>
<text x="405.1" y="111.61" font-size="6.42" fill="#eaedf7" stroke="#eaedf7" stroke-width=".1">School N 10 Ismael Legros</text>
<text x="554.9" y="111.61" font-size="6.42" fill="#eaedf7" stroke="#eaedf7" stroke-width=".1">School N 10 Ismael Legros</text>
<text x="19.2" y="123.67" font-size="6.42" fill="#eaedf7" stroke="#eaedf7" stroke-width=".1" textLength="137.6" lengthAdjust="spacing">8000ebff-2238-1111-400a-8ef7c4e25900</text>
<text x="168.8" y="123.67" font-size="6.42" fill="#eaedf7" stroke="#eaedf7" stroke-width=".1">admin00011</text>
<text x="226.9" y="123.67" font-size="6.42" fill="#eaedf7" stroke="#eaedf7" stroke-width=".1">Educational institution</text>
<text x="304.9" y="123.67" font-size="6.42" fill="#eaedf7" stroke="#eaedf7" stroke-width=".1">Social Partner</text>
<text x="363.8" y="123.67" font-size="6.42" fill="#eaedf7" stroke="#eaedf7" stroke-width=".1">Active</text>
<text x="405.1" y="123.67" font-size="6.42" fill="#eaedf7" stroke="#eaedf7" stroke-width=".1">Technical College N 23 Rickey Ernser</text>
<text x="554.9" y="123.67" font-size="6.42" fill="#eaedf7" stroke="#eaedf7" stroke-width=".1">Technical College N 22 Rickey Ernser</text>
<text x="19.2" y="135.73" font-size="6.42" fill="#eaedf7" stroke="#eaedf7" stroke-width=".1" textLength="133.8" lengthAdjust="spacing">80b000e-2200-1119-900e-8e7fefed50kb</text>
<text x="168.8" y="135.73" font-size="6.42" fill="#eaedf7" stroke="#eaedf7" stroke-width=".1">admin00011</text>
<text x="226.9" y="135.73" font-size="6.42" fill="#eaedf7" stroke="#eaedf7" stroke-width=".1">Educational institution</text>
<text x="304.9" y="135.73" font-size="6.42" fill="#eaedf7" stroke="#eaedf7" stroke-width=".1">Social Partner</text>
<text x="363.8" y="135.73" font-size="6.42" fill="#eaedf7" stroke="#eaedf7" stroke-width=".1">Active</text>
<text x="405.1" y="135.73" font-size="6.42" fill="#eaedf7" stroke="#eaedf7" stroke-width=".1">Technical College N 25 Kristopher Wunsch</text>
<text x="554.9" y="135.73" font-size="6.42" fill="#eaedf7" stroke="#eaedf7" stroke-width=".1">Technical College N 23 Kristopher</text>
<text x="19.2" y="147.79" font-size="6.42" fill="#eaedf7" stroke="#eaedf7" stroke-width=".1" textLength="137.6" lengthAdjust="spacing">25bdd5fa-2200-1117-900a-8e7fe9k200db</text>
<text x="168.8" y="147.79" font-size="6.42" fill="#eaedf7" stroke="#eaedf7" stroke-width=".1">admin00011</text>
<text x="226.9" y="147.79" font-size="6.42" fill="#eaedf7" stroke="#eaedf7" stroke-width=".1">Educational institution</text>
<text x="304.9" y="147.79" font-size="6.42" fill="#eaedf7" stroke="#eaedf7" stroke-width=".1">Social Partner</text>
<text x="363.8" y="147.79" font-size="6.42" fill="#eaedf7" stroke="#eaedf7" stroke-width=".1">Active</text>
<text x="405.1" y="147.79" font-size="6.42" fill="#eaedf7" stroke="#eaedf7" stroke-width=".1">University N 7 Milford Daniel</text>
<text x="554.9" y="147.79" font-size="6.42" fill="#eaedf7" stroke="#eaedf7" stroke-width=".1">University N 7 Milford Daniel</text>
<text x="19.2" y="159.85" font-size="6.42" fill="#eaedf7" stroke="#eaedf7" stroke-width=".1" textLength="137.6" lengthAdjust="spacing">8beedd60-2229-1111-900a-8a97eta290db</text>
<text x="168.8" y="159.85" font-size="6.42" fill="#eaedf7" stroke="#eaedf7" stroke-width=".1">admin00011</text>
<text x="226.9" y="159.85" font-size="6.42" fill="#eaedf7" stroke="#eaedf7" stroke-width=".1">Government institution</text>
<text x="304.9" y="159.85" font-size="6.42" fill="#eaedf7" stroke="#eaedf7" stroke-width=".1">Social Partner</text>
<text x="363.8" y="159.85" font-size="6.42" fill="#eaedf7" stroke="#eaedf7" stroke-width=".1">Active</text>
<text x="405.1" y="159.85" font-size="6.42" fill="#eaedf7" stroke="#eaedf7" stroke-width=".1">University N 7 Oaclon Sanford</text>
<text x="554.9" y="159.85" font-size="6.42" fill="#eaedf7" stroke="#eaedf7" stroke-width=".1">University G 7 Saxton Sanford</text>
<text x="19.2" y="171.91" font-size="6.42" fill="#eaedf7" stroke="#eaedf7" stroke-width=".1" textLength="137.6" lengthAdjust="spacing">90bd1aad-2230-1111-90be-9e7fe4e205db</text>
<text x="168.8" y="171.91" font-size="6.42" fill="#eaedf7" stroke="#eaedf7" stroke-width=".1">admin00011</text>
<text x="226.9" y="171.91" font-size="6.42" fill="#eaedf7" stroke="#eaedf7" stroke-width=".1">Government institution</text>
<text x="304.9" y="171.91" font-size="6.42" fill="#eaedf7" stroke="#eaedf7" stroke-width=".1">Social Partner</text>
<text x="363.8" y="171.91" font-size="6.42" fill="#eaedf7" stroke="#eaedf7" stroke-width=".1">Active</text>
<text x="405.1" y="171.91" font-size="6.42" fill="#eaedf7" stroke="#eaedf7" stroke-width=".1">Pension Fund N 1 Kian Wintheiser</text>
<text x="554.9" y="171.91" font-size="6.42" fill="#eaedf7" stroke="#eaedf7" stroke-width=".1">Pension Fond N 1 Kian Wintheiser</text>
<text x="19.2" y="183.97" font-size="6.42" fill="#eaedf7" stroke="#eaedf7" stroke-width=".1" textLength="137.6" lengthAdjust="spacing">0eedaada-3220-2117-90be-9a77e4d20000</text>
<text x="168.8" y="183.97" font-size="6.42" fill="#eaedf7" stroke="#eaedf7" stroke-width=".1">admin00011</text>
<text x="226.9" y="183.97" font-size="6.42" fill="#eaedf7" stroke="#eaedf7" stroke-width=".1">Private entrepreneur</text>
<text x="304.9" y="183.97" font-size="6.42" fill="#eaedf7" stroke="#eaedf7" stroke-width=".1">Software Supplier</text>
<text x="363.8" y="183.97" font-size="6.42" fill="#eaedf7" stroke="#eaedf7" stroke-width=".1">Active</text>
<text x="405.1" y="183.97" font-size="6.42" fill="#eaedf7" stroke="#eaedf7" stroke-width=".1">IE Jarred Dach</text>
<text x="554.9" y="183.97" font-size="6.42" fill="#eaedf7" stroke="#eaedf7" stroke-width=".1">IE Serred Dock</text>
<text x="19.2" y="196.03" font-size="6.42" fill="#eaedf7" stroke="#eaedf7" stroke-width=".1" textLength="137.6" lengthAdjust="spacing">08652285-2230-1117-900e-9e71ee5333db</text>
<text x="168.8" y="196.03" font-size="6.42" fill="#eaedf7" stroke="#eaedf7" stroke-width=".1">admin00011</text>
<text x="226.9" y="196.03" font-size="6.42" fill="#eaedf7" stroke="#eaedf7" stroke-width=".1">Private entrepreneur</text>
<text x="304.9" y="196.03" font-size="6.42" fill="#eaedf7" stroke="#eaedf7" stroke-width=".1">Raw Material Sup.</text>
<text x="363.8" y="196.03" font-size="6.42" fill="#eaedf7" stroke="#eaedf7" stroke-width=".1">Active</text>
<text x="405.1" y="196.03" font-size="6.42" fill="#eaedf7" stroke="#eaedf7" stroke-width=".1">IE Odell Dickens</text>
<text x="554.9" y="196.03" font-size="6.42" fill="#eaedf7" stroke="#eaedf7" stroke-width=".1">IE Odell Dickens</text>
</g>
<text x="8.6" y="39.25" font-size="5.4" font-weight="700" fill="#dfe2ff" text-anchor="middle">s</text>
<text x="8.6" y="51.31" font-size="5.4" font-weight="700" fill="#dfe2ff" text-anchor="middle">2</text>
<text x="8.6" y="63.37" font-size="5.4" font-weight="700" fill="#dfe2ff" text-anchor="middle">3</text>
<text x="8.6" y="75.43" font-size="5.4" font-weight="700" fill="#dfe2ff" text-anchor="middle">4</text>
<text x="8.6" y="87.49" font-size="5.4" font-weight="700" fill="#dfe2ff" text-anchor="middle">5</text>
<text x="8.6" y="99.55" font-size="5.4" font-weight="700" fill="#dfe2ff" text-anchor="middle">c</text>
<text x="8.6" y="111.61" font-size="5.4" font-weight="700" fill="#dfe2ff" text-anchor="middle">7</text>
<text x="8.6" y="123.67" font-size="5.4" font-weight="700" fill="#dfe2ff" text-anchor="middle">9</text>
<text x="8.6" y="135.73" font-size="5.4" font-weight="700" fill="#dfe2ff" text-anchor="middle">0</text>
<text x="8.6" y="147.79" font-size="5.4" font-weight="700" fill="#dfe2ff" text-anchor="middle">10</text>
<text x="8.6" y="159.85" font-size="5.4" font-weight="700" fill="#dfe2ff" text-anchor="middle">17</text>
<text x="8.6" y="171.91" font-size="5.4" font-weight="700" fill="#dfe2ff" text-anchor="middle">13</text>
<text x="8.6" y="183.97" font-size="5.4" font-weight="700" fill="#dfe2ff" text-anchor="middle">13</text>
<text x="8.6" y="196.03" font-size="5.4" font-weight="700" fill="#dfe2ff" text-anchor="middle">24</text>
<rect x="659.7" y="30.8" width="7.6" height="168.84" fill="#f8f8fb"/>
<rect x="661.3" y="38.2" width="4.2" height="140.3" rx="1.8" fill="#6e6e7a"/>
<path d="M661.5 36 l1.9 -2.6 l1.9 2.6 z" fill="#444"/><path d="M661.5 194.6 l1.9 2.4 l1.9 -2.4 z" fill="#444"/>
<rect x="0" y="199.3" width="667.3" height="6.8" fill="#fbfbfd"/>
<rect x="8.5" y="200.8" width="216.2" height="3.6" rx="1.6" fill="#9c9ca6"/>
<path d="M2.4 201.4 h3.4 l-1.7 2.6 z" fill="#555"/><circle cx="655.4" cy="202.8" r="1.6" fill="#8a8a96"/>
<rect x="0" y="215.7" width="667.3" height="13.2" fill="#06066c"/><rect x="0" y="215.5" width="667.3" height=".8" fill="#3444c8"/>
<path d="M4.4 219.6 h4.6 l-.8 4.6 h-3 z" fill="#b8c0f6"/><rect x="15.2" y="217.6" width=".5" height="8.6" fill="#4a56c8"/>
<path d="M20.6 223.4 l2.4 -3 l1.4 1.2 l1.2 -1.8" fill="none" stroke="#d8dcff" stroke-width=".9"/>
<circle cx="34.7" cy="221.9" r="1.4" fill="none" stroke="#8088d8" stroke-width=".7"/><circle cx="46.4" cy="222" r="1.1" fill="#c8ccff"/>
<path d="M57.2 223.6 l3.2 -3.2" stroke="#e8eaff" stroke-width="1.2"/>
<rect x="69.4" y="220.4" width="2.8" height="2.8" fill="none" stroke="#4650b8" stroke-width=".6"/><circle cx="82" cy="221.9" r="1.2" fill="none" stroke="#4650b8" stroke-width=".6"/>
<circle cx="94" cy="221.9" r="1.5" fill="none" stroke="#a8b0f0" stroke-width=".8"/><rect x="99.8" y="220.2" width="1.6" height="3.2" fill="#c8ccff"/>
<text x="106.6" y="223.4" font-size="3.6" font-weight="700" fill="#b0b8f4">07</text><circle cx="117" cy="222" r="1" fill="#c8ccff"/>
<text x="289.4" y="223.7" font-size="5" fill="#4452c0" textLength="16" lengthAdjust="spacing">◂◂ ◂◂</text>
<rect x="308.3" y="218" width=".6" height="7.8" fill="#6a78e0"/>
<text x="311.8" y="224" font-size="5.6" fill="#e8eaff">Page</text>
<rect x="328" y="219.4" width="16.3" height="5.2" fill="#fff"/><text x="329" y="223.8" font-size="4.6" fill="#667">1</text>
<text x="347.2" y="224" font-size="5.6" fill="#e8eaff">of 1</text>
<rect x="360.4" y="218" width=".6" height="7.8" fill="#6a78e0"/>
<text x="364.8" y="223.7" font-size="5" fill="#c8d0ff" textLength="16.5" lengthAdjust="spacing">▸▸ ▸▸</text>
<rect x="385" y="218.4" width="19.6" height="7.2" rx="1.2" fill="#fff"/><text x="387.6" y="223.9" font-size="4.6" font-weight="700" fill="#334">15</text><path d="M399 221 l1.4 1.8 l1.4 -1.8 z" fill="#334"/>
<text x="664.2" y="224" font-size="5.7" fill="#e8eaff" text-anchor="end">View 1 - 15 of 70</text>
</g></svg>
<!--TABLE-END-->

<!-- PIE CARD -->
<div class="abs" id="pc"></div>
<div class="abs" id="pi"></div>
<!--PIE-START-->
<svg class="abs" id="pie" style="left:1250px;top:426.7px" width="214" height="138.3" viewBox="0 0 214 138.3" font-family="Liberation Sans, sans-serif">
<defs>
<radialGradient id="pshade" cx=".38" cy=".3" r=".85"><stop offset="0" stop-color="#fff" stop-opacity=".16"/><stop offset=".6" stop-color="#fff" stop-opacity="0"/><stop offset="1" stop-color="#001030" stop-opacity=".18"/></radialGradient>
</defs>
<path d="M68.7 74.2 L68.70 14.40 A52 59.8 0 0 1 120.28 81.75 Z" fill="#4080e8" stroke="#4080e8" stroke-width=".3"/>
<path d="M68.7 74.2 L120.28 81.75 A52 59.8 0 0 1 108.05 113.29 Z" fill="#f8a62c" stroke="#f8a62c" stroke-width=".3"/>
<path d="M68.7 74.2 L108.05 113.29 A52 59.8 0 0 1 82.30 131.92 Z" fill="#e0440f" stroke="#e0440f" stroke-width=".3"/>
<path d="M68.7 74.2 L82.30 131.92 A52 59.8 0 0 1 70.75 133.95 Z" fill="#1c76ae" stroke="#1c76ae" stroke-width=".3"/>
<path d="M68.7 74.2 L70.75 133.95 A52 59.8 0 0 1 17.13 66.54 Z" fill="#c2c3c8" stroke="#c2c3c8" stroke-width=".3"/>
<path d="M68.7 74.2 L17.13 66.54 A52 59.8 0 0 1 30.60 33.51 Z" fill="#142d60" stroke="#142d60" stroke-width=".3"/>
<path d="M68.7 74.2 L30.60 33.51 A52 59.8 0 0 1 57.39 15.83 Z" fill="#fde480" stroke="#fde480" stroke-width=".3"/>
<path d="M68.7 74.2 L57.39 15.83 A52 59.8 0 0 1 68.70 14.40 Z" fill="#2b95dc" stroke="#2b95dc" stroke-width=".3"/>
<ellipse cx="68.7" cy="74.2" rx="52" ry="59.8" fill="url(#pshade)"/>
<text x="5.6" y="7.9" font-size="7.7" fill="#0b2a58" stroke="#0b2a58" stroke-width=".18" textLength="201" lengthAdjust="spacingAndGlyphs">Income Pie Chart of Income by Categories with Recalculation for Months 19N Year</text>
<text x="92.5" y="51.8" font-size="3.9" font-weight="700" fill="#1c2a44" text-anchor="middle">27.6%</text>
<text x="97.1" y="89.9" font-size="3.9" font-weight="700" fill="#1c2a44" text-anchor="middle">5.5%</text>
<text x="85.3" y="104.8" font-size="3.9" font-weight="700" fill="#1c2a44" text-anchor="middle">9.9%</text>
<text x="73.3" y="110.2" font-size="3.9" font-weight="700" fill="#1c2a44" text-anchor="middle">4%</text>
<text x="46" y="98.9" font-size="3.9" font-weight="700" fill="#1c2a44" text-anchor="middle">27 P%</text>
<text x="40.6" y="59.2" font-size="3.9" font-weight="700" fill="#1c2a44" text-anchor="middle">7.9%</text>
<text x="52.3" y="43.7" font-size="3.9" font-weight="700" fill="#1c2a44" text-anchor="middle">5.8%</text>
<text x="64.9" y="38.8" font-size="3.9" font-weight="700" fill="#1c2a44" text-anchor="middle">1.8%</text>
<rect x="156.4" y="49.1" width="54.4" height="49.3" rx="1" fill="#f3f5ee" stroke="#3c9360" stroke-width=".8"/>
<text x="183.6" y="56.3" font-size="5" fill="#d23a3a" text-anchor="middle" textLength="36" lengthAdjust="spacingAndGlyphs">Income Category</text>
<rect x="158.6" y="60.00" width="1.7" height="2.6" fill="#4080e8"/>
<text x="161.6" y="62.50" font-size="3.3" fill="#58709c" textLength="47" lengthAdjust="spacingAndGlyphs">Consultation or lesson 27.6%</text>
<rect x="158.6" y="64.85" width="1.7" height="2.6" fill="#f8a62c"/>
<text x="161.6" y="67.35" font-size="3.3" fill="#58709c" textLength="47" lengthAdjust="spacingAndGlyphs">Certification exams 5.5%</text>
<rect x="158.6" y="69.70" width="1.7" height="2.6" fill="#e0440f"/>
<text x="161.6" y="72.20" font-size="3.3" fill="#58709c" textLength="47" lengthAdjust="spacingAndGlyphs">Course fees in a year 9.9%</text>
<rect x="158.6" y="74.55" width="1.7" height="2.6" fill="#142d60"/>
<text x="161.6" y="77.05" font-size="3.3" fill="#58709c" textLength="47" lengthAdjust="spacingAndGlyphs">Conference & lecture 4.0%</text>
<rect x="158.6" y="79.40" width="1.7" height="2.6" fill="#c2c3c8"/>
<text x="161.6" y="81.90" font-size="3.3" fill="#58709c" textLength="47" lengthAdjust="spacingAndGlyphs">Educational services 27%</text>
<rect x="158.6" y="84.25" width="1.7" height="2.6" fill="#1c76ae"/>
<text x="161.6" y="86.75" font-size="3.3" fill="#58709c" textLength="47" lengthAdjust="spacingAndGlyphs">Subscriptions & studies 7.9%</text>
<rect x="158.6" y="89.10" width="1.7" height="2.6" fill="#fde480"/>
<text x="161.6" y="91.60" font-size="3.3" fill="#58709c" textLength="47" lengthAdjust="spacingAndGlyphs">Equipment rental income 5.8%</text>
<rect x="158.6" y="93.95" width="1.7" height="2.6" fill="#2b95dc"/>
<text x="161.6" y="96.45" font-size="3.3" fill="#58709c" textLength="47" lengthAdjust="spacingAndGlyphs">Donations & grants 1.8%</text>
<text x="1.2" y="135.6" font-size="3.8" font-weight="700" fill="#d24444" textLength="14.6" lengthAdjust="spacingAndGlyphs">MySTEP</text>
<text x="212" y="135.4" font-size="3.2" fill="#8a949c" text-anchor="end" textLength="26.5" lengthAdjust="spacingAndGlyphs">www.jqplot.com</text>
</svg>
<!--PIE-END-->

<div class="abs" id="foot">Designed and Developed by scorpion3dd. © 2024 - 2026. MyErp 3 Live Previews</div>
</div>
</body>
</html>
